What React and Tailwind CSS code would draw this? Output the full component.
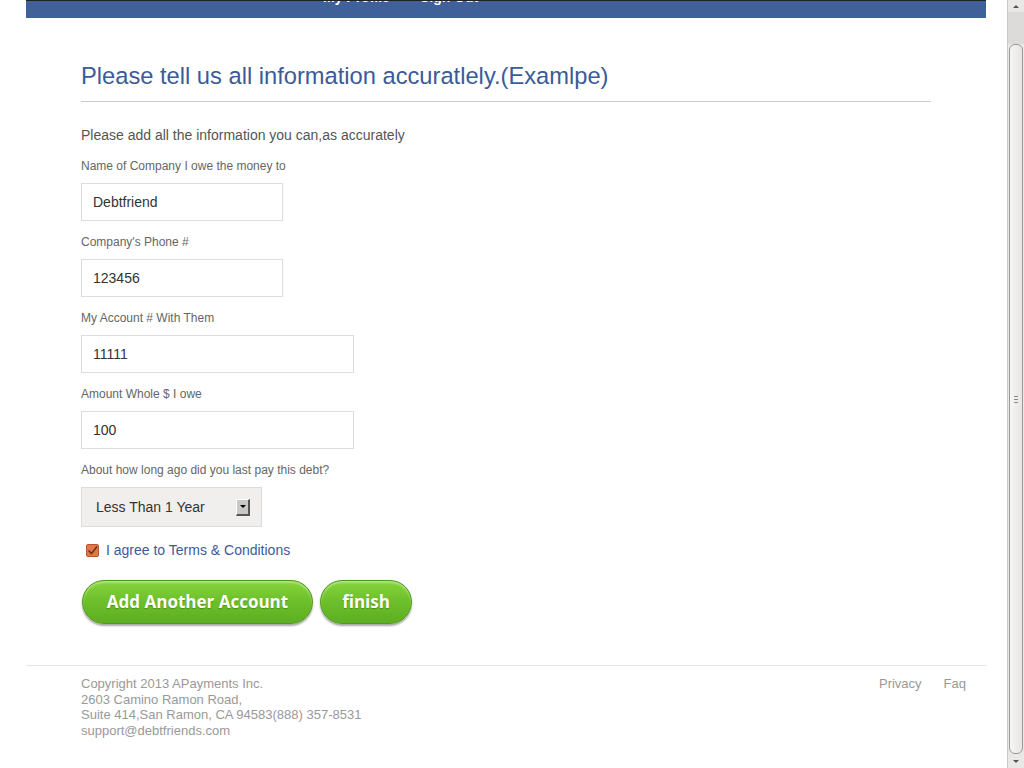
import React from 'react';

const fields = [
  { label: 'Name of Company I owe the money to', value: 'Debtfriend', w: 'w-[202px]' },
  { label: "Company's Phone #", value: '123456', w: 'w-[202px]' },
  { label: 'My Account # With Them', value: '11111', w: 'w-[273px]' },
  { label: 'Amount Whole $ I owe', value: '100', w: 'w-[273px]' },
];

function Scrollbar() {
  return (
    <div className="w-[17px] h-[768px] flex flex-col bg-[#e9e8e6] border-l border-[#c9c9c9] shrink-0">
      <div className="h-[12px] flex items-center justify-center">
        <div className="w-0 h-0 border-l-[3px] border-r-[3px] border-b-[3px] border-l-transparent border-r-transparent border-b-[#555]" />
      </div>
      <div className="h-[32px] bg-[#dcdbd9]" />
      <div className="flex-1 mx-[1px] rounded-[6px] border border-[#9a9a9a] bg-gradient-to-r from-[#f6f6f5] to-[#e7e6e4] flex items-center justify-center">
        <div className="flex flex-col gap-[2px]">
          <div className="w-[4px] h-px bg-[#888]" />
          <div className="w-[4px] h-px bg-[#888]" />
          <div className="w-[4px] h-px bg-[#888]" />
        </div>
      </div>
      <div className="h-[14px] flex items-center justify-center">
        <div className="w-0 h-0 border-l-[3px] border-r-[3px] border-t-[3px] border-l-transparent border-r-transparent border-t-[#555]" />
      </div>
    </div>
  );
}

function GreenButton({ children, className }) {
  return (
    <button
      className={`h-[44px] rounded-full border border-[#4f9a1c] bg-gradient-to-b from-[#86d43c] via-[#6cbf2a] to-[#5eae22] text-white font-bold text-[17px] shadow-[0_2px_2px_rgba(0,0,0,0.35),inset_0_2px_2px_rgba(255,255,255,0.35)] ${className}`}
      style={{ fontFamily: '"Open Sans", sans-serif', textShadow: '0 1px 1px rgba(0,0,0,0.25)' }}
    >
      {children}
    </button>
  );
}

export default function App() {
  return (
    <div className="flex w-[1024px] h-[768px] overflow-hidden bg-white" style={{ fontFamily: '"Liberation Sans", Arial, sans-serif' }}>
      <div className="flex-1 flex flex-col">
        <div className="ml-[26px] w-[960px]">
          {/* top nav, scrolled partly out of view */}
          <div className="h-[18px] bg-[#40609a] overflow-hidden border-t border-[#222]">
            <div className="flex gap-[30px] pl-[297px] -mt-[12px] text-white font-bold text-[14px] leading-[17px]">
              <span>My Profile</span>
              <span>Sign Out</span>
            </div>
          </div>

          <div className="px-[55px]">
            <h1 className="mt-[43px] text-[23.7px] leading-[30px] text-[#3b5b99]">
              Please tell us all information accuratlely.(Examlpe)
            </h1>
            <div className="mt-[10px] h-px bg-[#cccccc]" />

            <p className="mt-[24px] text-[14px] leading-[18px] text-[#555]">
              Please add all the information you can,as accurately
            </p>

            <div className="mt-[15px] flex flex-col">
              {fields.map((f) => (
                <div key={f.label} className="flex flex-col mb-[14px]">
                  <label className="text-[12px] leading-[14px] text-[#666]">{f.label}</label>
                  <div className={`mt-[10px] h-[38px] ${f.w} border border-[#dddddd] flex items-center px-[11px] text-[14px] text-[#333]`}>
                    {f.value}
                  </div>
                </div>
              ))}
              <label className="text-[12px] leading-[14px] text-[#666]">About how long ago did you last pay this debt?</label>
              <div className="mt-[10px] h-[40px] w-[181px] border border-[#dcdcdc] bg-[#f0efee] flex items-center pl-[14px] pr-[11px] text-[14px] text-[#333]">
                <span className="flex-1">Less Than 1 Year</span>
                <div className="w-[14px] h-[17px] bg-[#c8c8c6] border-r-2 border-b-2 border-[#555] border-t border-l border-t-white border-l-white flex items-center justify-center">
                  <div className="w-0 h-0 border-l-[3px] border-r-[3px] border-t-[3px] border-l-transparent border-r-transparent border-t-black" />
                </div>
              </div>
            </div>

            <div className="mt-[13px] h-[20px] flex items-center">
              <div className="ml-[5px] w-[13px] h-[13px] rounded-[2px] bg-[#e3764a] border border-[#b8552b] flex items-center justify-center">
                <svg width="11" height="11" viewBox="0 0 11 11">
                  <path d="M1.5 5.5 L4.5 8.5 L10 1.5" fill="none" stroke="#6b3218" strokeWidth="1.6" />
                </svg>
              </div>
              <span className="ml-[7px] text-[14px] text-[#3b5b99]">I agree to Terms &amp; Conditions</span>
            </div>

            <div className="mt-[20px] flex gap-[7px] pl-px">
              <GreenButton className="w-[231px]">Add Another Account</GreenButton>
              <GreenButton className="w-[92px]">finish</GreenButton>
            </div>
          </div>

          <div className="mt-[41px] h-px bg-[#e5e5e5]" />
          <div className="flex justify-between pl-[55px] pr-[20px] pt-[10px] text-[13px] leading-[15.7px] text-[#999]">
            <div>
              <div>Copyright 2013 APayments Inc.</div>
              <div>2603 Camino Ramon Road,</div>
              <div>Suite 414,San Ramon, CA 94583(888) 357-8531</div>
              <div>support@debtfriends.com</div>
            </div>
            <div className="flex gap-[22px]">
              <span>Privacy</span>
              <span>Faq</span>
            </div>
          </div>
        </div>
      </div>
      <Scrollbar />
    </div>
  );
}
